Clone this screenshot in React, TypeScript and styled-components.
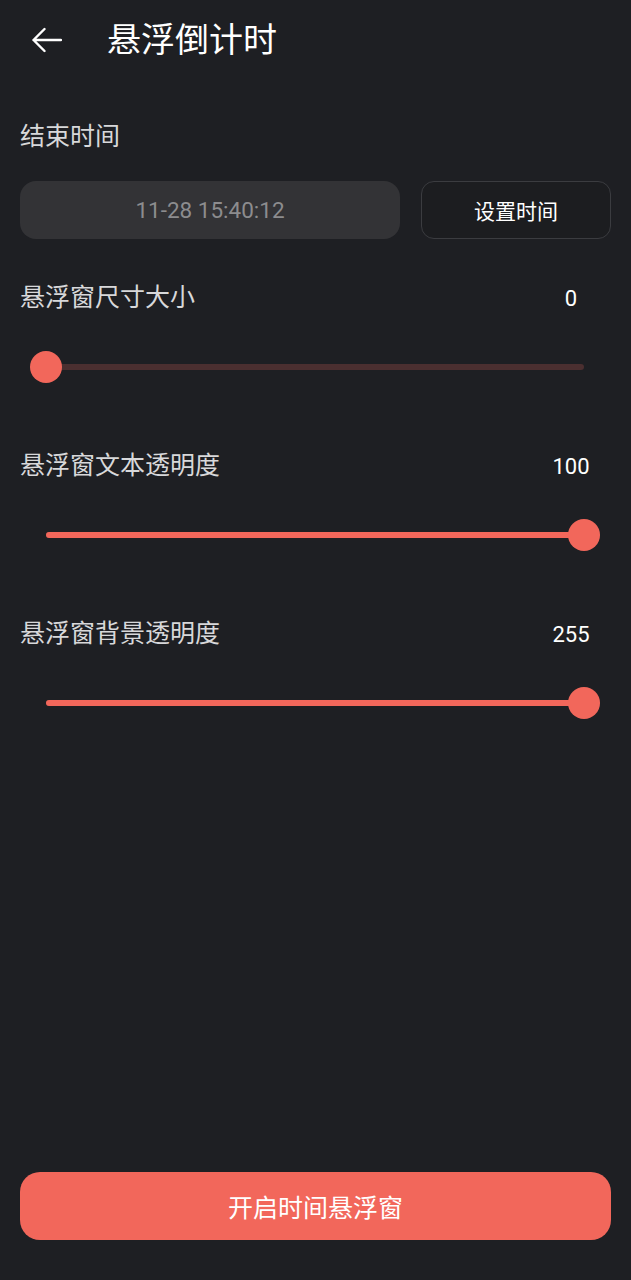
import styled, { createGlobalStyle } from "styled-components";

const GlobalStyle = createGlobalStyle`
  body {
    margin: 0;
    background: #1e1f23;
    font-family: Roboto, "Noto Sans CJK SC", sans-serif;
  }
`;

const ACCENT = "#f2675b";

const Page = styled.div`
  min-height: 100vh;
  display: flex;
  flex-direction: column;
  box-sizing: border-box;
  color: #ffffff;
`;

const Header = styled.header`
  height: 80px;
  display: flex;
  align-items: center;
  padding-left: 31px;
  gap: 45px;
`;

const BackButton = styled.button`
  background: none;
  border: none;
  padding: 0;
  width: 31px;
  height: 26px;
  display: flex;
  align-items: center;
  cursor: pointer;
`;

const Title = styled.h1`
  margin: 0;
  font-size: 34px;
  font-weight: 400;
  line-height: 40px;
  color: #ffffff;
`;

const Content = styled.main`
  padding: 0 20px;
  display: flex;
  flex-direction: column;
  flex: 1;
`;

const Label = styled.div`
  font-size: 25px;
  line-height: 32px;
  color: #d8d8da;
`;

const EndLabel = styled(Label)`
  margin-top: 41px;
`;

const TimeRow = styled.div`
  display: flex;
  gap: 21px;
  margin-top: 28px;
  height: 58px;
`;

const TimeField = styled.div`
  width: 380px;
  background: #333336;
  border-radius: 16px;
  display: flex;
  align-items: center;
  justify-content: center;
  font-size: 22.5px;
  color: #8c8c8e;
`;

const OutlineButton = styled.button`
  flex: 1;
  background: #1c1d20;
  border: 1px solid #3b3c40;
  border-radius: 13px;
  color: #ffffff;
  font-family: inherit;
  font-size: 21px;
  cursor: pointer;
`;

const SliderBlock = styled.section<{ $first?: boolean }>`
  margin-top: ${({ $first }) => ($first ? "43px" : "30px")};
`;

const SliderHead = styled.div`
  display: flex;
  justify-content: space-between;
  align-items: center;
  height: 32px;
`;

const Value = styled.span`
  width: 60px;
  margin-right: 10px;
  text-align: center;
  font-size: 22px;
  color: #ffffff;
`;

const SliderArea = styled.div`
  height: 106px;
  padding: 0 27px 0 26px;
  display: flex;
  align-items: center;
`;

const Track = styled.div`
  position: relative;
  flex: 1;
  height: 6px;
  border-radius: 3px;
  background: #4b2f30;
`;

const Fill = styled.div`
  height: 100%;
  border-radius: 3px;
  background: ${ACCENT};
`;

const Thumb = styled.div`
  position: absolute;
  top: 50%;
  width: 32px;
  height: 32px;
  margin: -16px 0 0 -16px;
  border-radius: 50%;
  background: ${ACCENT};
`;

const Spacer = styled.div`
  flex: 1;
`;

const PrimaryButton = styled.button`
  height: 68px;
  margin-bottom: 40px;
  border: none;
  border-radius: 20px;
  background: ${ACCENT};
  color: #ffffff;
  font-family: inherit;
  font-size: 25px;
  cursor: pointer;
`;

const BackArrow = () => (
  <svg width="31" height="26" viewBox="0 0 31 26" fill="none">
    <path
      d="M30 13H2.5M13.5 2L2.5 13l11 11"
      stroke="#ffffff"
      strokeWidth="2.4"
      strokeLinecap="round"
      strokeLinejoin="round"
    />
  </svg>
);

interface SliderProps {
  label: string;
  value: number;
  max: number;
  first?: boolean;
}

const Slider = ({ label, value, max, first }: SliderProps) => {
  const pct = (value / max) * 100;
  return (
    <SliderBlock $first={first}>
      <SliderHead>
        <Label>{label}</Label>
        <Value>{value}</Value>
      </SliderHead>
      <SliderArea>
        <Track>
          <Fill style={{ width: `${pct}%` }} />
          <Thumb style={{ left: `${pct}%` }} />
        </Track>
      </SliderArea>
    </SliderBlock>
  );
};

const App = () => {
  return (
    <Page>
      <GlobalStyle />
      <Header>
        <BackButton>
          <BackArrow />
        </BackButton>
        <Title>悬浮倒计时</Title>
      </Header>
      <Content>
        <EndLabel>结束时间</EndLabel>
        <TimeRow>
          <TimeField>11-28 15:40:12</TimeField>
          <OutlineButton>设置时间</OutlineButton>
        </TimeRow>
        <Slider label="悬浮窗尺寸大小" value={0} max={100} first />
        <Slider label="悬浮窗文本透明度" value={100} max={100} />
        <Slider label="悬浮窗背景透明度" value={255} max={255} />
        <Spacer />
        <PrimaryButton>开启时间悬浮窗</PrimaryButton>
      </Content>
    </Page>
  );
};

export default App;
